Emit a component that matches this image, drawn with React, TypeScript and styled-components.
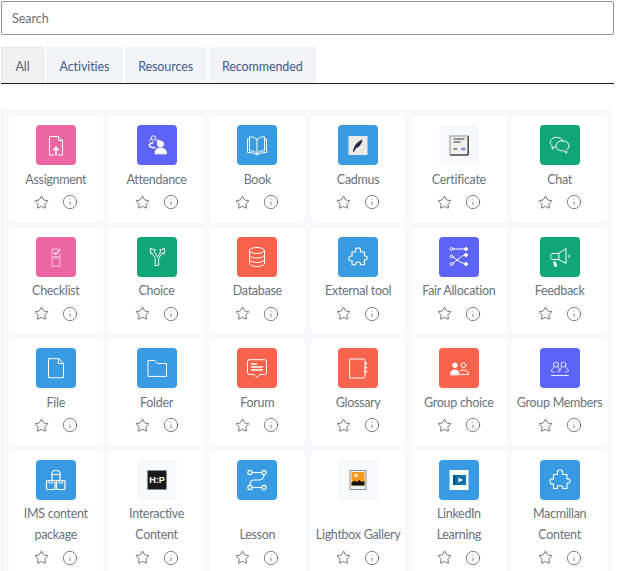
import React from 'react';
import styled, { createGlobalStyle } from 'styled-components';
import { Star, Info } from 'lucide-react';

const Global = createGlobalStyle`
	html, body {
		margin: 0;
		height: 100%;
		overflow: hidden;
		background: #fff;
	}
	body {
		font-family: Lato, 'Open Sans', sans-serif;
	}
`;

const Page = styled.div`
	width: 613px;
	padding: 1px 0 0 1px;
`;

const SearchInput = styled.input`
	display: block;
	box-sizing: border-box;
	width: 100%;
	height: 34px;
	padding: 0 10px;
	border: 1px solid #8f959e;
	border-radius: 2px;
	font-family: inherit;
	font-size: 12.5px;
	color: #495057;
	outline: none;
	&::placeholder {
		color: #6a737b;
		opacity: 1;
	}
`;

const TabBar = styled.ul`
	display: flex;
	gap: 2px;
	list-style: none;
	margin: 12px 0 0;
	padding: 0;
	height: 37px;
	box-sizing: border-box;
	border-bottom: 1px solid #1d2125;
`;

const Tab = styled.li<{ $active?: boolean }>`
	box-sizing: border-box;
	height: 36px;
	display: flex;
	align-items: center;
	padding: 2px 13.5px 0;
	border-radius: 2px 2px 0 0;
	font-size: 12.5px;
	letter-spacing: -0.1px;
	color: ${p => (p.$active ? '#5b636b' : '#3f5c8f')};
	background: ${p => (p.$active ? '#f1f1f2' : '#f3f4f7')};
	border: ${p => (p.$active ? '1px solid #e3e4e6' : 'none')};
	border-bottom: none;
`;

const Grid = styled.div`
	display: grid;
	grid-template-columns: repeat(6, 1fr);
	gap: 6px 6.4px;
	margin: 25px 1px 0 0;
	padding: 7px 6.2px 7px 6.6px;
	background: #f8f9fa;
	border-left: 1px solid #e6e8ea;
`;

const Card = styled.div`
	display: flex;
	flex-direction: column;
	align-items: center;
	padding: 9px 0 12.5px;
	background: #fff;
	border-radius: 4px;
`;

const Tile = styled.div<{ $color: string }>`
	width: 40px;
	height: 40px;
	flex: none;
	display: flex;
	align-items: center;
	justify-content: center;
	border-radius: 4px;
	background: ${p => p.$color};
	svg {
		display: block;
	}
`;

const Label = styled.div`
	flex: 1;
	display: flex;
	align-items: flex-end;
	justify-content: center;
	margin-top: 3.5px;
	text-align: center;
	font-size: 12.5px;
	letter-spacing: -0.3px;
	line-height: 21px;
	color: #6a737b;
	white-space: pre-line;
`;

const Actions = styled.div`
	display: flex;
	align-items: center;
	height: 14px;
	gap: 13px;
	margin-top: 5.5px;
	color: #3f464d;
	svg {
		display: block;
	}
`;

const C = {
	pink: '#eb66a2',
	purple: '#5d63f6',
	blue: '#399be2',
	green: '#11a676',
	red: '#f7634d',
	plain: '#f8f9fa',
};

const Glyph = ({ children }: { children: React.ReactNode }) => (
	<svg width="24" height="24" viewBox="0 0 24 24" fill="none" stroke="#fff" strokeWidth="1" strokeLinecap="round" strokeLinejoin="round">
		{children}
	</svg>
);

const Picture = ({ children }: { children: React.ReactNode }) => (
	<svg width="24" height="24" viewBox="0 0 24 24">
		{children}
	</svg>
);

const puzzle =
	'M9.500 6.500c-1-3 .5-4.500 2.500-4.500s3.500 1.500 2.500 4.500H19v4.500c2-.5 3 .5 3 2s-1 2.700-3 2v5.500h-4.500c.8-2-.5-3-2.500-3s-3.300 1-2.500 3H5.500V16c-2 .5-3.500-.5-3.500-2.500s1.500-3 3.500-2.500V6.500z';

const icons: Record<string, React.ReactNode> = {
	assign: (
		<Glyph>
			<path d="M9.5 22H5.5V3.5h9l4 4V22h-4" />
			<path d="M14.5 3.5v4h4" />
			<path d="M12 22v-7" strokeWidth="1.4" />
			<path d="M9.5 16.5 12 13.5l2.5 3z" fill="#fff" />
		</Glyph>
	),
	attendance: (
		<Glyph>
			<circle cx="8.500" cy="5" r="2.200" />
			<circle cx="13" cy="8" r="1.300" />
			<path d="M8 9.500c-2 .5-3.500 1.500-4 3 1.500 2 4 2.500 6 2" strokeWidth="1.300" />
			<path d="M6.500 5.500C5 6 4.500 7 4.500 8" />
			<circle cx="15.500" cy="11" r="3" fill="#fff" />
			<path d="M10 20.500c0-4 2-5.500 5.500-5.500s6 1.500 6 5.500z" fill="#fff" />
		</Glyph>
	),
	book: (
		<Glyph>
			<path d="M12 6.500C10 4.500 7.500 3.800 4.500 3.800v14c3 0 5.500.7 7.500 2.700 2-2 4.500-2.700 7.500-2.700v-14c-3 0-5.500.7-7.500 2.700z" />
			<path d="M12 6.500v14" />
			<path d="M4.500 6H2.500v13.500c4 0 7 .7 9.500 2.500 2.500-1.800 5.500-2.500 9.500-2.500V6h-2" />
		</Glyph>
	),
	cadmus: (
		<Picture>
			<rect x="2.500" y="3" width="19" height="19" fill="#efe9e6" />
			<path d="M7 18.500c.7-5 3.500-9.500 9.500-12-.4 3.500-2.500 7-6.500 8.800l-2.200 3.700z" fill="#1b2540" />
		</Picture>
	),
	certificate: (
		<Picture>
			<rect x="3" y="3" width="18.500" height="19" fill="#f1f2ee" stroke="#666" strokeWidth="0.700" />
			<path d="M21 3.500V22H3.500" stroke="#222" strokeWidth="1" fill="none" />
			<path d="M6.500 6h11M6.500 9h7M6.500 16h4" stroke="#333" strokeWidth="1.100" />
			<rect x="14" y="14.500" width="4.500" height="3" rx="1" fill="#8d93d8" />
		</Picture>
	),
	chat: (
		<Glyph>
			<path d="M14.700 7.800C14 5.800 11.500 4.300 8.500 4.300c-3.400 0-6.200 2.300-6.200 5.100 0 1.500.8 2.800 2.100 3.700l-.4 2.900 3-2.100c.3 0 .5.100.8.100" />
			<path d="M14.500 7.800c3.600 0 6.500 2.200 6.500 5 0 1.700-1 3.100-2.600 4l.4 3.400-3.300-2.400h-1c-3.600 0-6.500-2.200-6.500-5s2.900-5 6.500-5z" />
		</Glyph>
	),
	checklist: (
		<Glyph>
			<path d="M14 4H8v7.500h8V8" stroke="#f6c0da" />
			<path d="M10 7.500l1.800 1.800L16 4.200" strokeWidth="1.100" />
			<rect x="8" y="13" width="8" height="8" stroke="#f6c0da" strokeWidth="1.100" />
		</Glyph>
	),
	choice: (
		<Glyph>
			<path d="M10.300 20.500h3.400V14c0-2.500 2.500-3.500 3.500-6l1.800 1.200.7-5.700-5.200 1.500 1.500 1.300c-1 2.200-2.800 3.500-3.500 5.700-.7-2.200-2.500-3.500-3.500-5.700l1.500-1.300-5.200-1.500.7 5.700L6.800 8c1 2.500 3.500 3.500 3.500 6z" />
		</Glyph>
	),
	database: (
		<Glyph>
			<ellipse cx="12" cy="5.500" rx="7.500" ry="3" />
			<path d="M4.500 5.500v13c0 1.700 3.400 3 7.500 3s7.500-1.300 7.500-3v-13" />
			<path d="M4.500 10c0 1.700 3.400 3 7.500 3s7.500-1.300 7.500-3" />
			<path d="M4.500 14.500c0 1.700 3.400 3 7.500 3s7.500-1.300 7.500-3" />
		</Glyph>
	),
	lti: (
		<svg width="22" height="22" viewBox="0 0 24 24" fill="none" stroke="#fff" strokeWidth="1.200" strokeLinejoin="round">
			<path d={puzzle} />
		</svg>
	),
	macmillan: (
		<svg width="24" height="24" viewBox="0 0 24 24" fill="none" stroke="#fff" strokeWidth="1.100" strokeLinejoin="round">
			<path d={puzzle} />
		</svg>
	),
	ratingallocate: (
		<Glyph>
			<circle cx="4.500" cy="4" r="1.500" />
			<path d="M6 4h11" />
			<circle cx="19" cy="4" r="1.500" fill="#fff" />
			<circle cx="4.500" cy="11.500" r="1.500" />
			<circle cx="4.500" cy="19" r="1.500" />
			<path d="M6 12l4 3 4.500-3.500 3-1.500M6 18.500l4-3.500 4 2.500 3.500 1" />
			<circle cx="19" cy="10" r="1.500" fill="#fff" />
			<circle cx="19" cy="19" r="1.500" fill="#fff" />
		</Glyph>
	),
	feedback: (
		<Glyph>
			<path d="M10.500 8.500 18 3.500v15l-7.500-4" />
			<path d="M10.500 8.500H5a2.500 2.500 0 0 0-2.500 3c0 1.700 1 3 2.500 3h5.500z" />
			<path d="M21 10v2.500" />
			<path d="M5.500 17l1 4.500h2.500L7.500 17z" fill="#fff" stroke="#fff" strokeWidth=".6" />
		</Glyph>
	),
	file: (
		<Glyph>
			<path d="M14.500 2.700H4.500v19h15V7.500z" />
			<path d="M14.500 2.700v4.800h5" />
		</Glyph>
	),
	folder: (
		<Glyph>
			<path d="M3 20V4.500h7l2.500 3H21.500V20z" />
		</Glyph>
	),
	forum: (
		<Glyph>
			<path d="M4.500 3.700h15a2 2 0 0 1 2 2v10.800a2 2 0 0 1-2 2H15l-3 3-3-3H4.500a2 2 0 0 1-2-2V5.700a2 2 0 0 1 2-2z" />
			<path d="M6.500 8h5M6.500 11h11M6.500 14h11" strokeWidth="1.300" />
		</Glyph>
	),
	glossary: (
		<Glyph>
			<path d="M4 3h13.500a1.500 1.500 0 0 1 1.500 1.500v16a1.500 1.500 0 0 1-1.500 1.500H4z" />
			<path d="M19.200 7.500h1M19.200 11.500h1M19.200 15.500h1" strokeWidth="2" />
		</Glyph>
	),
	choicegroup: (
		<Glyph>
			<circle cx="8" cy="9.300" r="2.300" fill="#fff" />
			<path d="M3.500 18.500c0-3 1.500-4.500 4.500-4.500s4 1.500 4 4.500z" fill="#fff" />
			<circle cx="16.500" cy="9.300" r="2.300" />
			<path d="M13.500 14.800c.8-.5 1.800-.8 3-.8 3 0 5 1.500 5 4.500h-8" />
		</Glyph>
	),
	groupmembers: (
		<Glyph>
			<circle cx="8" cy="8.500" r="2.500" strokeWidth=".8" />
			<circle cx="15.500" cy="8.500" r="2.500" strokeWidth=".8" />
			<path d="M6 10.500c0 2-2.500 2.500-2.800 4 0 .8 1.300 1.500 2.800 1.500M10 10.500c0 1.500 1.800 2.500 1.800 4 0 1-1 1.500-2.300 1.500" strokeWidth=".8" />
			<path d="M13.500 10.500c0 1.500-1.700 2.500-1.700 4M17.500 10.500c0 2 2.800 2.500 3 4 0 .8-1.500 1.500-3 1.500" strokeWidth=".8" />
			<path d="M3.500 19.500h17" strokeWidth=".9" />
		</Glyph>
	),
	imscp: (
		<Glyph>
			<rect x="2.500" y="12.500" width="8.500" height="9" rx=".5" strokeWidth="1.200" />
			<rect x="12.500" y="12.500" width="8.500" height="9" rx=".5" strokeWidth="1.200" />
			<path d="M8 12V5.500C8 3.500 9.500 2.500 12 2.500s4 1 4 3V12" strokeWidth="1.200" />
			<path d="M8 6.500h8M5 12.500V15h3.500v-2.500M15 12.500V15h3.500v-2.500" />
		</Glyph>
	),
	h5p: (
		<Picture>
			<rect x="2.500" y="2.500" width="19" height="19" fill="#1a1a1a" />
			<text x="12" y="15.300" textAnchor="middle" fontFamily="'Liberation Sans', sans-serif" fontWeight="700" fontSize="9" fill="#fff">H:P</text>
		</Picture>
	),
	lesson: (
		<Glyph>
			<circle cx="5" cy="4.500" r="2.200" strokeWidth="1.200" />
			<circle cx="19" cy="4.500" r="2.200" strokeWidth="1.200" />
			<circle cx="5" cy="19.500" r="2.200" strokeWidth="1.200" />
			<circle cx="19" cy="19.500" r="2.200" strokeWidth="1.200" />
			<path d="M7.200 4.500h9.600M16.800 19.500H7.200M19 6.700c0 3-2 5.300-5 5.300H9c-3 0-4 2-4 5.300" strokeWidth="1.200" />
		</Glyph>
	),
	lightbox: (
		<Picture>
			<rect x="4" y="2.500" width="16" height="19" fill="#f2f2f2" stroke="#777" strokeWidth="0.800" />
			<rect x="5.500" y="4" width="13" height="13.500" fill="#f59a1e" />
			<circle cx="10" cy="7.500" r="1.800" fill="#fff3c4" />
			<path d="M5.500 17.500v-3l3-2 2 1.500 3-2 2 2 3-1v4.500z" fill="#141414" />
		</Picture>
	),
	linkedin: (
		<Picture>
			<rect x="2.500" y="2" width="19" height="20" fill="#fff" />
			<rect x="6" y="7" width="13" height="10" fill="#0a74a8" />
			<rect x="6" y="7" width="2.500" height="10" fill="#0b5a85" />
			<path d="M11.500 9.500l4.500 2.500-4.500 2.500z" fill="#fff" />
		</Picture>
	),
};

const modules = [
	{ name: 'Assignment', color: C.pink, icon: 'assign' },
	{ name: 'Attendance', color: C.purple, icon: 'attendance' },
	{ name: 'Book', color: C.blue, icon: 'book' },
	{ name: 'Cadmus', color: C.blue, icon: 'cadmus' },
	{ name: 'Certificate', color: C.plain, icon: 'certificate' },
	{ name: 'Chat', color: C.green, icon: 'chat' },
	{ name: 'Checklist', color: C.pink, icon: 'checklist' },
	{ name: 'Choice', color: C.green, icon: 'choice' },
	{ name: 'Database', color: C.red, icon: 'database' },
	{ name: 'External tool', color: C.blue, icon: 'lti' },
	{ name: 'Fair Allocation', color: C.purple, icon: 'ratingallocate' },
	{ name: 'Feedback', color: C.green, icon: 'feedback' },
	{ name: 'File', color: C.blue, icon: 'file' },
	{ name: 'Folder', color: C.blue, icon: 'folder' },
	{ name: 'Forum', color: C.red, icon: 'forum' },
	{ name: 'Glossary', color: C.red, icon: 'glossary' },
	{ name: 'Group choice', color: C.red, icon: 'choicegroup' },
	{ name: 'Group Members', color: C.purple, icon: 'groupmembers' },
	{ name: 'IMS content\npackage', color: C.blue, icon: 'imscp' },
	{ name: 'Interactive\nContent', color: C.plain, icon: 'h5p' },
	{ name: 'Lesson', color: C.blue, icon: 'lesson' },
	{ name: 'Lightbox Gallery', color: C.plain, icon: 'lightbox' },
	{ name: 'LinkedIn\nLearning', color: C.blue, icon: 'linkedin' },
	{ name: 'Macmillan\nContent', color: C.blue, icon: 'macmillan' },
];

export default function App() {
	return (
		<>
			<Global />
			<Page>
				<SearchInput placeholder="Search" />
				<TabBar>
					<Tab $active>All</Tab>
					<Tab>Activities</Tab>
					<Tab>Resources</Tab>
					<Tab>Recommended</Tab>
				</TabBar>
				<Grid>
					{modules.map(m => (
						<Card key={m.name}>
							<Tile $color={m.color}>{icons[m.icon]}</Tile>
							<Label>{m.name}</Label>
							<Actions>
								<Star size={15} strokeWidth={1.2} />
								<Info size={16} strokeWidth={1} />
							</Actions>
						</Card>
					))}
				</Grid>
			</Page>
		</>
	);
}
